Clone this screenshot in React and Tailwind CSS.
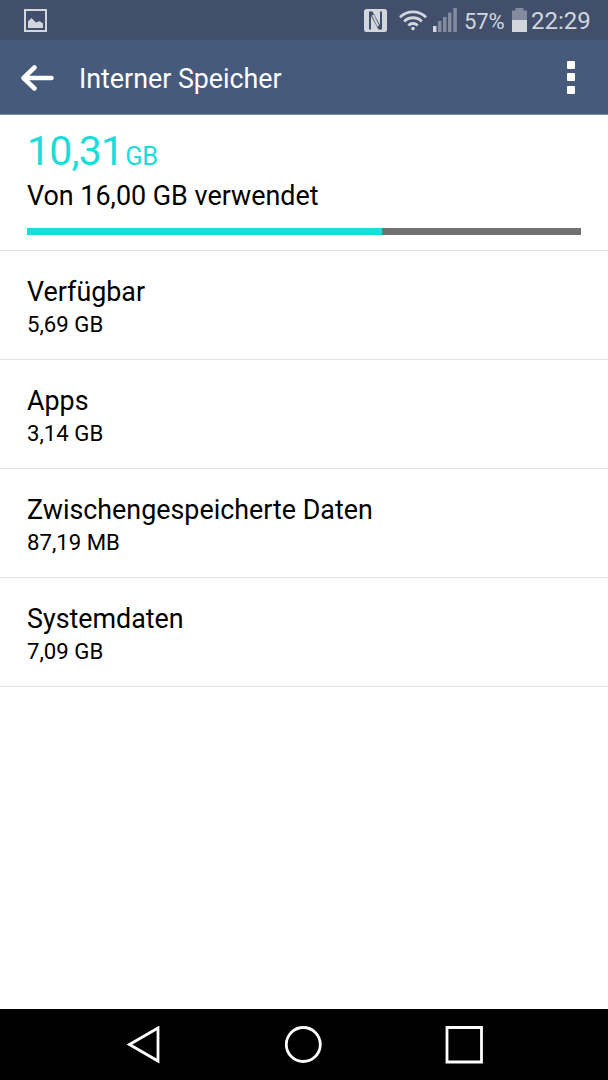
import React from "react";

const total = 16;
const used = 10.24;

const items = [
  { id: 1, title: "Verfügbar", size: "5,69 GB" },
  { id: 2, title: "Apps", size: "3,14 GB" },
  { id: 3, title: "Zwischengespeicherte Daten", size: "87,19 MB" },
  { id: 4, title: "Systemdaten", size: "7,09 GB" },
];

const StatusBar = () => {
  return (
    <div className="flex h-[40px] shrink-0 items-center bg-[#414f6c] pl-6 pr-[17px] text-[#d3d6dc]">
      {/* Screenshot notification */}
      <svg className="h-[23px] w-[23px]" viewBox="0 0 23 23">
        <rect x="1" y="1" width="21" height="21" fill="none" stroke="currentColor" strokeWidth="2" />
        <path d="M4 19v-6.5L7.5 9l4.5 4.5 1.5-.5 2-1 3.5 2.5V19z" fill="currentColor" />
      </svg>

      <div className="ml-auto flex items-center">
        {/* NFC */}
        <svg className="h-[23px] w-[23px]" viewBox="0 0 23 23">
          <rect width="23" height="23" rx="2.5" fill="currentColor" />
          <path d="M5 2.5v18h2V7l7.500 13.500h1.500L7.500 2.500z" fill="#414f6c" />
          <path d="M18 20.500v-18h-2V16L8.500 2.500H7l8.500 18z" fill="#414f6c" />
          <path d="M8.800 6l5.400 11" fill="none" stroke="currentColor" strokeWidth="2" />
        </svg>
        {/* WLAN */}
        <svg className="ml-3 h-[22px] w-[28px]" viewBox="0 0 28 22" fill="none" stroke="currentColor" strokeWidth="2.8">
          <path d="M1 8.2a18.4 18.4 0 0 1 26 0" />
          <path d="M5.2 12.4a12.4 12.4 0 0 1 17.6 0" />
          <path d="M9.4 16.4a6.5 6.5 0 0 1 9.2 0" />
          <circle cx="14" cy="19.6" r="1.8" fill="currentColor" stroke="none" />
        </svg>
        {/* Signal */}
        <svg className="ml-[5px] h-[24px] w-[25px]" viewBox="0 0 25 24">
          <path d="M1 18h3.5v6H1z" fill="currentColor" />
          <path d="M6 13h3.5v11H6zM11 9h3.5v15H11zM16 4.5h3.5V24H16zM21.3 0h3.5v24h-3.5z" fill="#838c9e" />
        </svg>
        <span className="ml-[7px] w-[41px] pt-[3px] text-[22px] leading-[24px] tracking-[-0.1px]">57%</span>
        {/* Battery */}
        <svg className="ml-[7px] h-[24px] w-[15px]" viewBox="0 0 15 24">
          <path d="M3.5 0h8v2.5H15V12H0V2.5h3.5z" fill="#838c9e" />
          <path d="M0 12h15v12H0z" fill="currentColor" />
        </svg>
        <span className="ml-1 w-[60px] pt-[2px] text-[24px] leading-[24px]">22:29</span>
      </div>
    </div>
  );
};

const Header = () => {
  return (
    <header className="flex h-[75px] shrink-0 items-center border-b border-[#7d8ba3] bg-[#465a7b] pl-[21px] pr-[33px] text-white">
      <button aria-label="Zurück" className="pt-px">
        <svg className="h-[28px] w-[33px]" viewBox="0 0 33 28" fill="none" stroke="currentColor" strokeWidth="4.5" strokeLinecap="round" strokeLinejoin="round">
          <path d="M13.5 3.5 2.5 14l11 10.5M3 14h27.5" />
        </svg>
      </button>
      <h1 className="ml-[25px] pt-[3px] text-[26.8px] leading-8">Interner Speicher</h1>
      <button aria-label="Menü" className="ml-auto flex flex-col gap-[4.5px]">
        <span className="h-2 w-2 rounded-[1px] bg-white" />
        <span className="h-2 w-2 rounded-[1px] bg-white" />
        <span className="h-2 w-2 rounded-[1px] bg-white" />
      </button>
    </header>
  );
};

const Summary = () => {
  return (
    <section className="border-b border-[#e3e3e3] px-[27px] pb-[15px] pt-3">
      <div className="flex items-baseline text-[#1cdcda]">
        <span className="text-[41px] leading-[48px] tracking-[-0.8px]">10,31</span>
        <span className="ml-[2px] text-[25.5px] tracking-[-0.3px]">GB</span>
      </div>
      <p className="mt-[5px] text-[26.9px] leading-8">Von 16,00 GB verwendet</p>
      <div className="mt-4 h-[7px] bg-[#717171]">
        <div className="h-full bg-[#1cdcda]" style={{ width: `${(used / total) * 100}%` }} />
      </div>
    </section>
  );
};

const NavBar = () => {
  return (
    <nav className="flex h-[71px] shrink-0 items-center bg-black pl-[127px] pr-[125px] text-white">
      <svg className="h-[38px] w-[33px]" viewBox="0 0 33 38" fill="none" stroke="currentColor" strokeWidth="2.8">
        <path d="M2.5 18.5 31 2v33z" />
      </svg>
      <svg className="ml-[124px] h-[38px] w-[38px]" viewBox="0 0 38 38" fill="none" stroke="currentColor" strokeWidth="2.8">
        <circle cx="19.3" cy="18.5" r="17" />
      </svg>
      <svg className="ml-auto h-[38px] w-[38px]" viewBox="0 0 38 38" fill="none" stroke="currentColor" strokeWidth="2.8">
        <path d="M2 1.5h34.5V36H2z" />
      </svg>
    </nav>
  );
};

const App = () => {
  return (
    <div className="flex h-screen w-full flex-col bg-white font-[Roboto,sans-serif] text-black">
      <StatusBar />
      <Header />
      <main className="flex-1">
        <Summary />
        <ul>
          {items.map((item) => (
            <li key={item.id} className="h-[109px] border-b border-[#e3e3e3] px-[27px] pt-[25px]">
              <h2 className="text-[26.85px] leading-8">{item.title}</h2>
              <p className="mt-[3px] text-[22.2px] leading-[26px]">{item.size}</p>
            </li>
          ))}
        </ul>
      </main>
      <NavBar />
    </div>
  );
};

export default App;
